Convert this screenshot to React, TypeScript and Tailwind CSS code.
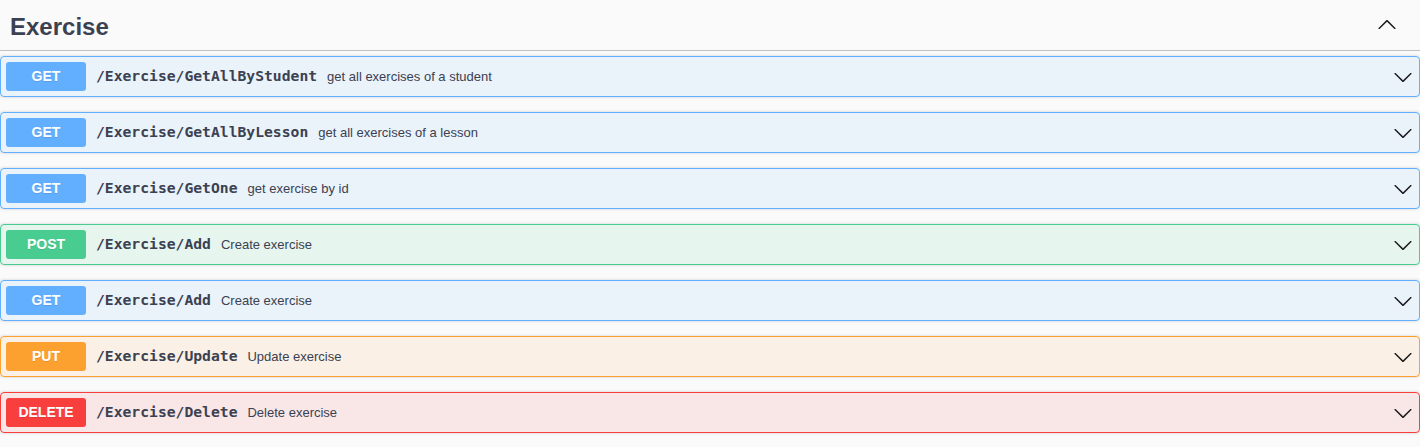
import React from "react";

type Op = {
  method: "GET" | "POST" | "PUT" | "DELETE";
  path: string;
  summary: string;
};

const ops: Op[] = [
  { method: "GET", path: "/Exercise/GetAllByStudent", summary: "get all exercises of a student" },
  { method: "GET", path: "/Exercise/GetAllByLesson", summary: "get all exercises of a lesson" },
  { method: "GET", path: "/Exercise/GetOne", summary: "get exercise by id" },
  { method: "POST", path: "/Exercise/Add", summary: "Create exercise" },
  { method: "GET", path: "/Exercise/Add", summary: "Create exercise" },
  { method: "PUT", path: "/Exercise/Update", summary: "Update exercise" },
  { method: "DELETE", path: "/Exercise/Delete", summary: "Delete exercise" },
];

const styles = {
  GET: { block: "border-[#61affe] bg-[#61affe]/10", badge: "bg-[#61affe]" },
  POST: { block: "border-[#49cc90] bg-[#49cc90]/10", badge: "bg-[#49cc90]" },
  PUT: { block: "border-[#fca130] bg-[#fca130]/10", badge: "bg-[#fca130]" },
  DELETE: { block: "border-[#f93e3e] bg-[#f93e3e]/10", badge: "bg-[#f93e3e]" },
};

const Arrow = ({ up = false }: { up?: boolean }) => (
  <svg
    width="20"
    height="20"
    viewBox="0 0 20 20"
    className={`fill-[#1b1b1b] ${up ? "rotate-180" : ""}`}
  >
    <path d="M17.418 6.109c.272-.268.709-.268.979 0s.271.701 0 .969l-7.908 7.83c-.27.268-.707.268-.979 0l-7.908-7.83c-.27-.268-.27-.701 0-.969.271-.268.709-.268.979 0L10 13.25l7.418-7.141z" />
  </svg>
);

const OpBlock = ({ op }: { op: Op }) => {
  const s = styles[op.method];
  return (
    <div
      className={`mb-[15px] rounded-[4px] border shadow-[0_0_3px_rgba(0,0,0,0.19)] ${s.block}`}
    >
      <div className="flex items-center p-[5px]">
        <div
          className={`w-[80px] shrink-0 rounded-[3px] py-[6px] text-center text-[14px] font-bold leading-[17px] text-white [text-shadow:0_1px_0_rgba(0,0,0,0.1)] ${s.badge}`}
          style={{ fontFamily: '"Liberation Sans", Arial, sans-serif' }}
        >
          {op.method}
        </div>
        <span
          className="px-[10px] text-[14.7px] font-semibold text-[#3b4151]"
          style={{ fontFamily: '"DejaVu Sans Mono", monospace' }}
        >
          {op.path}
        </span>
        <span
          className="flex-1 text-[13px] text-[#3b4151]"
          style={{ fontFamily: '"Liberation Sans", Arial, sans-serif' }}
        >
          {op.summary}
        </span>
        <div className="flex items-center pr-[1px] pl-[10px]">
          <Arrow />
        </div>
      </div>
    </div>
  );
};

export default function App() {
  return (
    <div className="min-h-screen bg-[#fafafa]">
      <div
        className="mb-[5px] flex h-[51px] items-center border-b border-[#3b4151]/30 pr-[23px] pl-[10px]"
        style={{ fontFamily: '"Liberation Sans", Arial, sans-serif' }}
      >
        <h3 className="flex-1 pt-[3px] text-[24px] font-bold text-[#3b4151]">Exercise</h3>
        <Arrow up />
      </div>
      <div>
        {ops.map((op, i) => (
          <OpBlock key={i} op={op} />
        ))}
      </div>
    </div>
  );
}
